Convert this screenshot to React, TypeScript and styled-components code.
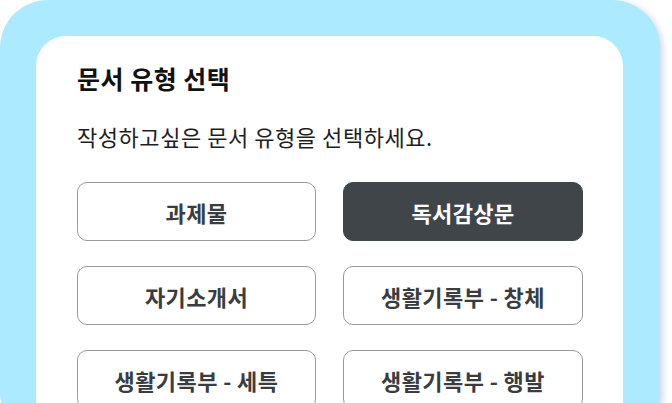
import React, { useState } from "react";
import styled, { createGlobalStyle } from "styled-components";

const Global = createGlobalStyle`
  html, body { margin: 0; padding: 0; background: #ffffff; overflow: hidden; }
  body { font-family: "Noto Sans CJK KR", "Noto Sans", sans-serif; }
  * { box-sizing: border-box; }
`;

const Frame = styled.div`
  width: 660px;
  height: 440px;
  background: #abeaff;
  border-radius: 48px;
  padding: 36px 37px 0 36px;
  box-shadow: 3px 2px 6px rgba(90, 120, 170, 0.28);
`;

const Card = styled.div`
  background: #ffffff;
  border-radius: 30px 30px 0 0;
  height: 100%;
  padding: 24px 40px 0 41px;
  display: flex;
  flex-direction: column;
`;

const Title = styled.h1`
  margin: 0;
  font-size: 25px;
  line-height: 36px;
  font-weight: 700;
  color: #111111;
  letter-spacing: 0.5px;
`;

const Subtitle = styled.p`
  margin: 24px 0 0 0;
  font-size: 22px;
  line-height: 32px;
  font-weight: 400;
  color: #1e1e1e;
  letter-spacing: 0.55px;
`;

const Grid = styled.div`
  margin-top: 30px;
  display: grid;
  grid-template-columns: 239px 240px;
  column-gap: 27px;
  row-gap: 25px;
`;

const Option = styled.button<{ $active: boolean }>`
  height: 59px;
  border-radius: 10px;
  border: ${(p) => (p.$active ? "1.5px solid #40454a" : "1.5px solid #9a9a9a")};
  background: ${(p) => (p.$active ? "#40454a" : "#ffffff")};
  color: ${(p) => (p.$active ? "#ffffff" : "#393d41")};
  font-family: "Noto Sans CJK KR", "Noto Sans", sans-serif;
  font-size: 22px;
  font-weight: 700;
  letter-spacing: 0.4px;
  display: flex;
  align-items: center;
  justify-content: center;
  padding: 0;
  cursor: pointer;
`;

const options = [
  "과제물",
  "독서감상문",
  "자기소개서",
  "생활기록부 - 창체",
  "생활기록부 - 세특",
  "생활기록부 - 행발",
];

export default function App() {
  const [selected, setSelected] = useState("독서감상문");
  return (
    <>
      <Global />
      <Frame>
        <Card>
          <Title>문서 유형 선택</Title>
          <Subtitle>작성하고싶은 문서 유형을 선택하세요.</Subtitle>
          <Grid>
            {options.map((o) => (
              <Option key={o} $active={o === selected} onClick={() => setSelected(o)}>
                {o}
              </Option>
            ))}
          </Grid>
        </Card>
      </Frame>
    </>
  );
}
